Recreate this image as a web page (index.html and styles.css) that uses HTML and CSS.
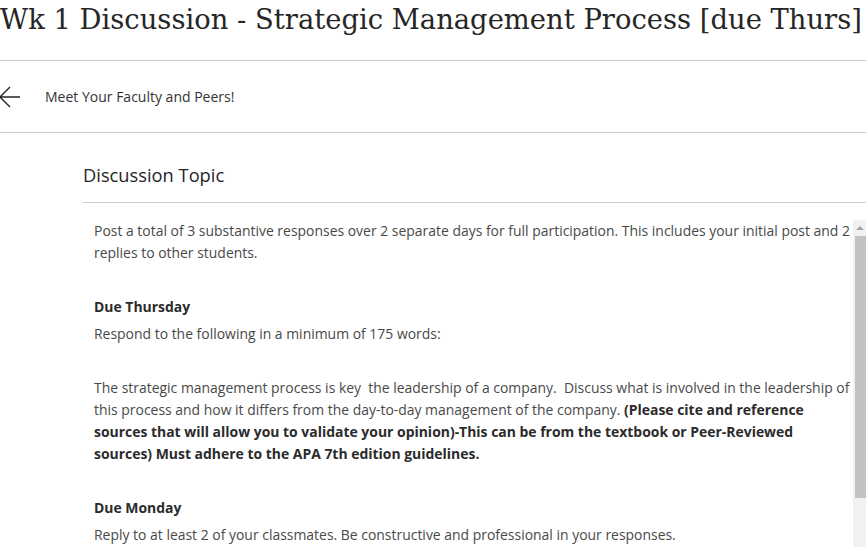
FILE: index.html
```html
<!DOCTYPE html>
<html>
<head>
<meta charset="utf-8">
<link rel="stylesheet" href="styles.css">
</head>
<body>
<h1 class="title">Wk 1 Discussion - Strategic Management Process [due Thurs]</h1>
<div class="nav">
  <svg class="back" width="22" height="24" viewBox="0 0 22 24"><path d="M21 12H1M11 2L1 12l10 10" fill="none" stroke="#262626" stroke-width="1.4"/></svg>
  <span class="nav-text">Meet Your Faculty and Peers!</span>
</div>
<div class="topic">
  <h2 class="topic-head">Discussion Topic</h2>
  <div class="topic-body">
    <div class="text">
      <p>Post a total of 3 substantive responses over 2 separate days for full participation. This includes your initial post and 2 replies to other students.</p>
      <p>&nbsp;</p>
      <p><b>Due Thursday</b></p>
      <p>Respond to the following in a minimum of 175 words:</p>
      <p>&nbsp;</p>
      <p>The strategic management process is key &nbsp;the leadership of a company. &nbsp;Discuss what is involved in the leadership of this process and how it differs from the day-to-day management of the company. <b>(Please cite and reference sources that will allow you to validate your opinion)-This can be from the textbook or Peer-Reviewed sources) Must adhere to the APA 7th edition guidelines.</b></p>
      <p>&nbsp;</p>
      <p><b>Due Monday</b></p>
      <p>Reply to at least 2 of your classmates. Be constructive and professional in your responses.</p>
    </div>
    <div class="scrollbar">
      <div class="sb-up"><span class="tri"></span></div>
      <div class="sb-thumb"></div>
    </div>
  </div>
</div>
</body>
</html>
```
FILE: styles.css
```css
html, body { margin: 0; padding: 0; background: #fff; }
body { font-family: "Open Sans", sans-serif; color: #333; width: 866px; height: 547px; overflow: hidden; }
.title {
  margin: 0;
  height: 61px;
  box-sizing: border-box;
  line-height: 40px;
  font-family: "DejaVu Serif", serif;
  font-weight: normal;
  font-size: 27.4px;
  color: #262626;
  white-space: nowrap;
  border-bottom: 1px solid #cdcdcd;
}
.nav {
  height: 72px;
  box-sizing: border-box;
  display: flex;
  align-items: center;
  border-bottom: 1px solid #cdcdcd;
}
.back { flex: none; margin-left: -1px; }
.nav-text { margin-left: 24px; font-size: 14px; color: #333; }
.topic { margin-left: 83px; }
.topic-head {
  margin: 0;
  height: 70px;
  box-sizing: border-box;
  border-bottom: 1px solid #cdcdcd;
  font-size: 18.3px;
  font-weight: normal;
  line-height: 24px;
  padding-top: 30px;
  color: #262626;
}
.topic-body { display: flex; margin-top: 17px; height: 330px; }
.text { flex: 1; padding-left: 11px; font-size: 13.95px; line-height: 22px; color: #494949; }
.text p { margin: 0 0 5px; }
.text b { color: #2b2b2b; }
.scrollbar { flex: none; width: 13px; background: #f1f1f1; display: flex; flex-direction: column; align-items: flex-end; }
.sb-up { width: 13px; height: 16px; display: flex; align-items: center; justify-content: center; }
.tri { width: 0; height: 0; border-left: 4px solid transparent; border-right: 4px solid transparent; border-bottom: 4px solid #a3a3a3; margin-left: 1px; }
.sb-thumb { width: 11px; height: 262px; background: #c1c1c1; }
```
